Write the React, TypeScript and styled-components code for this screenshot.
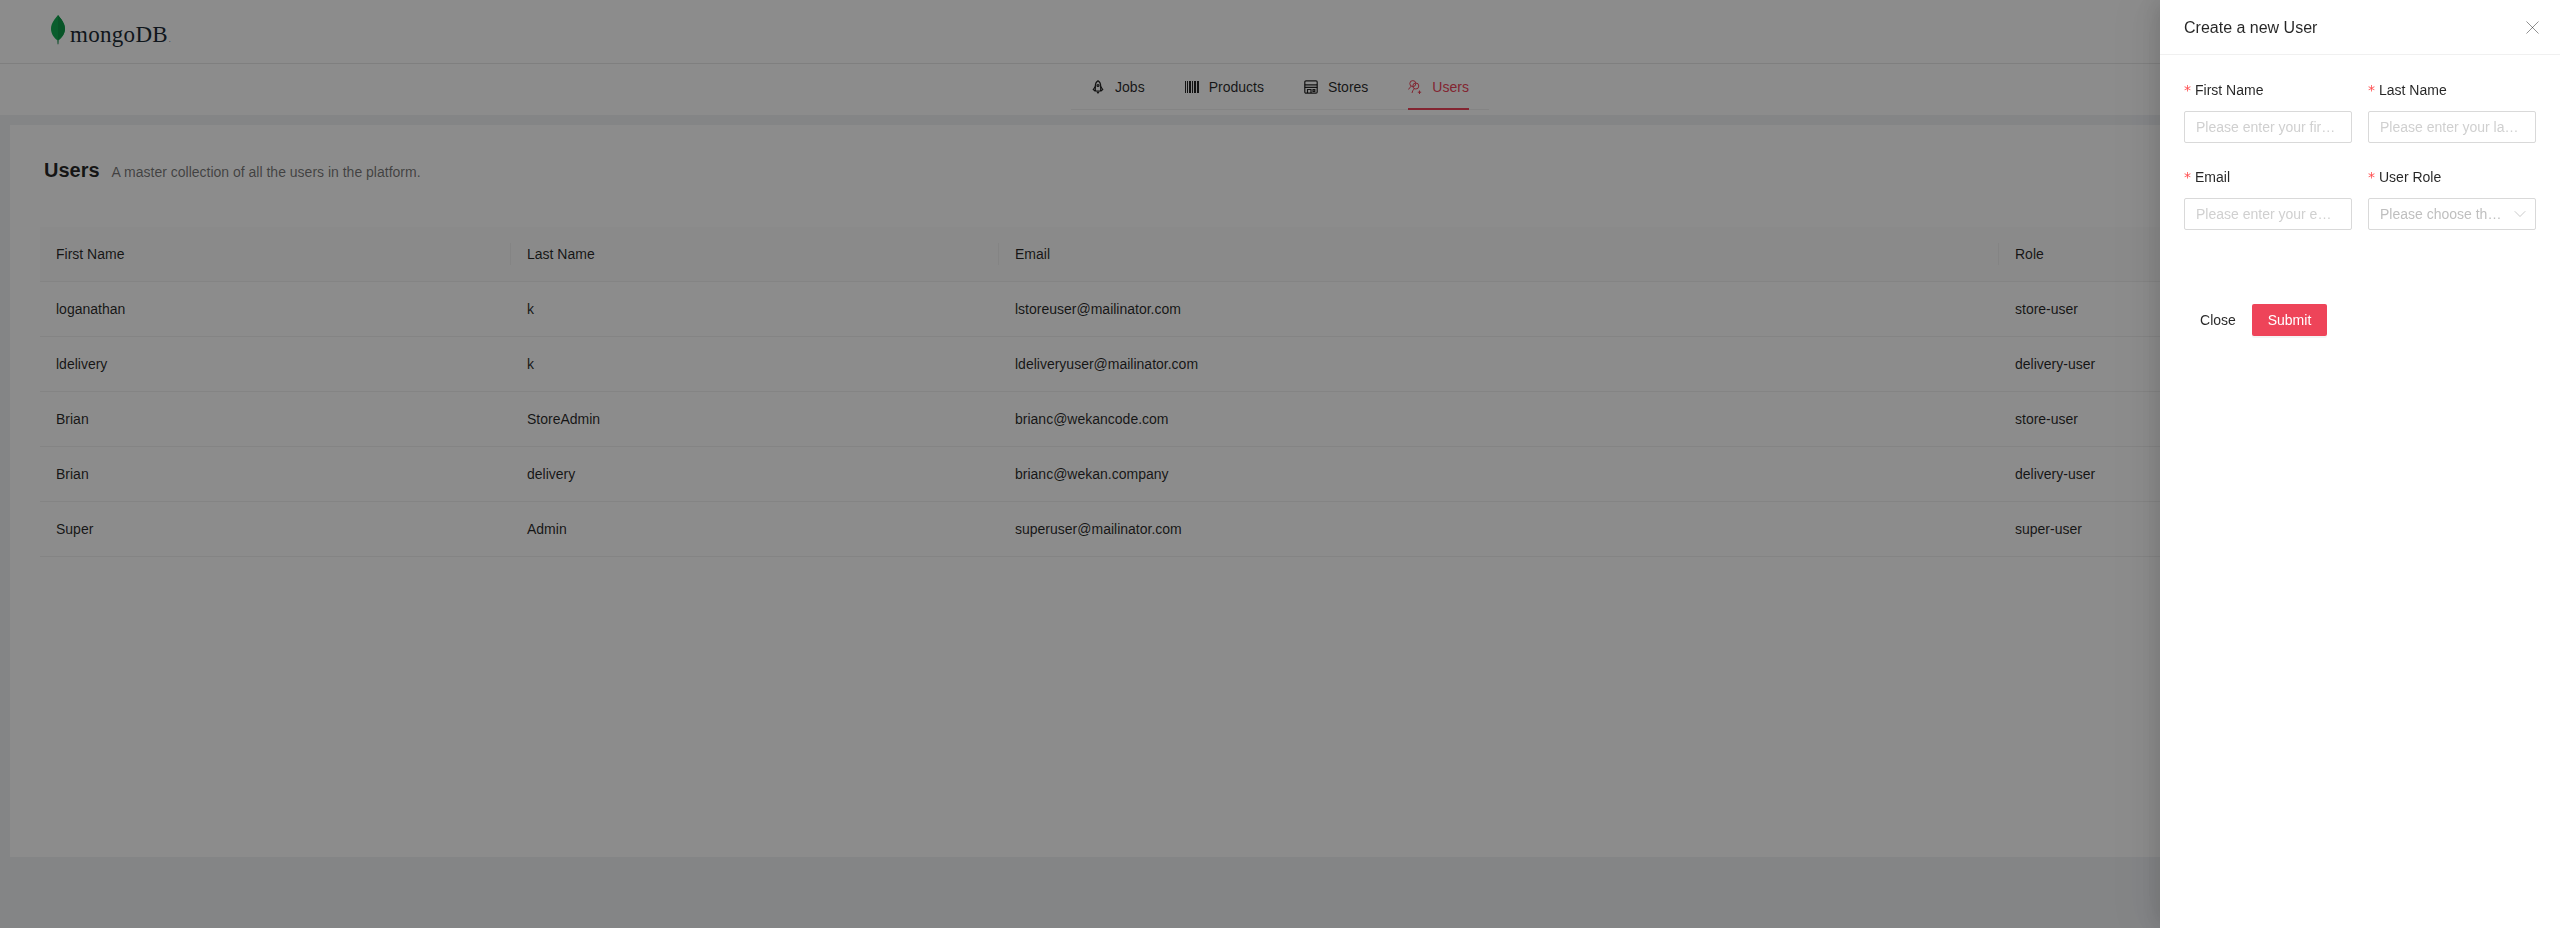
import styled, { createGlobalStyle } from "styled-components";
import { X, ChevronDown } from "lucide-react";

const GlobalStyle = createGlobalStyle`
  html, body {
    margin: 0;
    padding: 0;
    height: 100%;
    overflow: hidden;
    background: #f0f2f5;
    font-family: "Liberation Sans", Arial, sans-serif;
    font-size: 14px;
    color: rgba(0, 0, 0, 0.85);
  }
`;

const Page = styled.div`
  width: 2560px;
  height: 928px;
  display: flex;
  flex-direction: column;
  overflow: hidden;
`;

const TopBar = styled.header`
  height: 64px;
  box-sizing: border-box;
  flex: none;
  display: flex;
  align-items: center;
  padding-left: 50px;
  background: #fff;
  border-bottom: 1px solid #e8e8e8;
`;

const NavBar = styled.nav`
  height: 51px;
  flex: none;
  display: flex;
  justify-content: center;
  align-items: flex-start;
  background: #fff;
`;

const NavTabs = styled.div`
  display: flex;
  gap: 40px;
  height: 46px;
  padding: 0 20px;
  box-sizing: border-box;
  border-bottom: 1px solid #f0f0f0;
`;

const NavItem = styled.a<{ $active?: boolean }>`
  display: flex;
  align-items: center;
  gap: 10px;
  height: 46px;
  padding-top: 2px;
  box-sizing: border-box;
  color: ${(p) => (p.$active ? "#ee4459" : "rgba(0, 0, 0, 0.85)")};
  border-bottom: 2px solid ${(p) => (p.$active ? "#ee4459" : "transparent")};
`;

const Content = styled.main`
  flex: 1;
  padding: 10px 0 0 10px;
`;

const Card = styled.section`
  height: 732px;
  box-sizing: border-box;
  background: #fff;
  padding: 34px 0 0 30px;
`;

const TitleRow = styled.div`
  display: flex;
  align-items: baseline;
  gap: 12px;
  height: 68px;
  padding-left: 4px;
`;

const Title = styled.h1`
  margin: 0;
  font-size: 20px;
  font-weight: 700;
`;

const Subtitle = styled.span`
  font-size: 14px;
  color: rgba(0, 0, 0, 0.55);
`;

const Table = styled.table`
  width: 2520px;
  border-collapse: collapse;
  table-layout: fixed;
`;

const HeadCell = styled.th`
  position: relative;
  height: 54px;
  padding: 0 16px;
  box-sizing: border-box;
  text-align: left;
  font-weight: 400;
  background: #fcfcfc;
  border-bottom: 1px solid #f0f0f0;

  &:not(:first-child)::before {
    content: "";
    position: absolute;
    left: -1px;
    top: 16px;
    width: 1px;
    height: 22px;
    background: #f0f0f0;
  }
`;

const Cell = styled.td`
  height: 55px;
  padding: 0 16px;
  box-sizing: border-box;
  border-bottom: 1px solid #f0f0f0;
`;

const Mask = styled.div`
  position: fixed;
  inset: 0;
  background: rgba(0, 0, 0, 0.45);
`;

const Drawer = styled.aside`
  position: fixed;
  top: 0;
  right: 0;
  bottom: 0;
  width: 400px;
  background: #fff;
  box-shadow: -6px 0 16px rgba(0, 0, 0, 0.08), -9px 0 28px rgba(0, 0, 0, 0.05), -12px 0 48px 16px rgba(0, 0, 0, 0.03);
`;

const DrawerHeader = styled.div`
  height: 55px;
  box-sizing: border-box;
  display: flex;
  align-items: center;
  justify-content: space-between;
  padding: 1px 24px 0;
  border-bottom: 1px solid #f0f0f0;
`;

const DrawerTitle = styled.div`
  font-size: 16px;
`;

const CloseIcon = styled(X)`
  color: rgba(0, 0, 0, 0.45);
  margin-right: -8px;
`;

const Form = styled.form`
  padding: 25px 24px 24px;
`;

const FieldGrid = styled.div`
  display: grid;
  grid-template-columns: 168px 168px;
  column-gap: 16px;
  row-gap: 24px;
`;

const Field = styled.div`
  display: flex;
  flex-direction: column;
`;

const Label = styled.label`
  height: 31px;
  line-height: 21px;
  box-sizing: border-box;

  &::before {
    content: "*";
    display: inline-block;
    margin-right: 4px;
    color: #ff4d4f;
    font-family: "DejaVu Sans", sans-serif;
  }
`;

const Input = styled.input`
  width: 100%;
  height: 32px;
  box-sizing: border-box;
  padding: 0 11px;
  border: 1px solid #d9d9d9;
  border-radius: 2px;
  outline: none;
  font: inherit;
  background: #fff;
  text-overflow: ellipsis;

  &::placeholder {
    color: #d0d0d0;
  }
`;

const Select = styled.div`
  height: 32px;
  box-sizing: border-box;
  display: flex;
  align-items: center;
  gap: 8px;
  padding: 0 11px;
  border: 1px solid #d9d9d9;
  border-radius: 2px;
  color: #bfbfbf;
`;

const SelectText = styled.span`
  flex: 1;
  min-width: 0;
  white-space: nowrap;
  overflow: hidden;
  text-overflow: ellipsis;
`;

const SelectArrow = styled(ChevronDown)`
  flex: none;
  margin: 0 -6px 0 -2px;
`;

const Actions = styled.div`
  display: flex;
  margin-top: 74px;
`;

const TextButton = styled.button`
  width: 68px;
  height: 32px;
  padding: 0;
  border: 0;
  background: none;
  font: inherit;
  color: rgba(0, 0, 0, 0.85);
`;

const PrimaryButton = styled.button`
  width: 75px;
  height: 32px;
  padding: 0;
  border: 0;
  border-radius: 2px;
  background: #ee4459;
  font: inherit;
  color: #fff;
  box-shadow: 0 2px 0 rgba(0, 0, 0, 0.045);
`;

const LeafBox = styled.span`
  display: flex;
  margin-bottom: 3px;
`;

const Leaf = () => (
  <LeafBox>
    <svg width="16" height="32" viewBox="0 0 16 32">
      <path d="M8 1C5 5 1 9 1 15c0 5 3.500 9 6 11l.5 4h1l.5-4c2.500-2 6-6 6-11C15 9 11 5 8 1z" fill="#13aa52" />
      <path d="M8 1v25c2.500-2 7-6 7-11C15 9 11 5 8 1z" fill="#109a4a" />
      <path d="M7.500 26h1l-.2 5h-.6z" fill="#b8c4c2" />
    </svg>
  </LeafBox>
);

const Wordmark = styled.span`
  font-family: "Liberation Serif", serif;
  font-size: 23px;
  letter-spacing: 0.3px;
  color: #1d2b35;
  margin-left: 4px;
  line-height: 1;
  padding-top: 6px;
`;

const WordmarkDot = styled.span`
  font-size: 6px;
  margin-left: 1px;
`;

const RocketIcon = () => (
  <svg width="14" height="14" viewBox="0 0 14 14" fill="none" stroke="currentColor" strokeWidth="1.200">
    <path d="M7 .8C5.300 1.800 4.300 3.500 4.300 6v5h5.400V6C9.700 3.500 8.700 1.800 7 .8z" />
    <circle cx="7" cy="5.500" r="1" />
    <path d="M4.300 6.500L2.300 9.500l2 1.500M9.700 6.500l2 3-2 1.500M5.800 11.500L7 13l1.200-1.500" />
  </svg>
);

const BarcodeIcon = () => (
  <svg width="14" height="14" viewBox="0 0 14 14" fill="currentColor">
    <rect x="0" y="1" width="1" height="12" />
    <rect x="2" y="1" width="1" height="12" />
    <rect x="4" y="1" width="2" height="12" />
    <rect x="7" y="1" width="1" height="12" />
    <rect x="9" y="1" width="2" height="12" />
    <rect x="12" y="1" width="2" height="12" />
  </svg>
);

const StoreIcon = () => (
  <svg width="14" height="14" viewBox="0 0 14 14" fill="none" stroke="currentColor" strokeWidth="1.200">
    <rect x=".8" y=".8" width="12.400" height="12.400" rx="1.200" />
    <path d="M.8 4.800h12.400M.8 7.300h12.400M3.500 13V9.500H7V13M9 9.500h1.800v1.800H9z" />
  </svg>
);

const UsersIcon = () => (
  <svg width="14" height="14" viewBox="0 0 14 14" fill="none" stroke="currentColor" strokeWidth="1">
    <circle cx="4.800" cy="3.600" r="3" />
    <circle cx="7.800" cy="6" r="3" />
    <path d="M.6 9.500c.6-1.500 1.500-2.600 2.700-3.200M4 13c.3-1.800 1-3 2.200-4M11.500 10.500v3.500M9.800 12.200h3.400" />
  </svg>
);

const rows = [
  ["loganathan", "k", "lstoreuser@mailinator.com", "store-user"],
  ["ldelivery", "k", "ldeliveryuser@mailinator.com", "delivery-user"],
  ["Brian", "StoreAdmin", "brianc@wekancode.com", "store-user"],
  ["Brian", "delivery", "brianc@wekan.company", "delivery-user"],
  ["Super", "Admin", "superuser@mailinator.com", "super-user"],
];

const App = () => {
  return (
    <>
      <GlobalStyle />
      <Page>
        <TopBar>
          <Leaf />
          <Wordmark>
            mongoDB<WordmarkDot>.</WordmarkDot>
          </Wordmark>
        </TopBar>
        <NavBar>
          <NavTabs>
            <NavItem><RocketIcon />Jobs</NavItem>
            <NavItem><BarcodeIcon />Products</NavItem>
            <NavItem><StoreIcon />Stores</NavItem>
            <NavItem $active><UsersIcon />Users</NavItem>
          </NavTabs>
        </NavBar>
        <Content>
          <Card>
            <TitleRow>
              <Title>Users</Title>
              <Subtitle>A master collection of all the users in the platform.</Subtitle>
            </TitleRow>
            <Table>
              <colgroup>
                <col style={{ width: 471 }} />
                <col style={{ width: 488 }} />
                <col style={{ width: 1000 }} />
                <col style={{ width: 561 }} />
              </colgroup>
              <thead>
                <tr>
                  <HeadCell>First Name</HeadCell>
                  <HeadCell>Last Name</HeadCell>
                  <HeadCell>Email</HeadCell>
                  <HeadCell>Role</HeadCell>
                </tr>
              </thead>
              <tbody>
                {rows.map((r) => (
                  <tr key={r[2]}>
                    {r.map((c, i) => (
                      <Cell key={i}>{c}</Cell>
                    ))}
                  </tr>
                ))}
              </tbody>
            </Table>
          </Card>
        </Content>
      </Page>
      <Mask />
      <Drawer>
        <DrawerHeader>
          <DrawerTitle>Create a new User</DrawerTitle>
          <CloseIcon size={23} strokeWidth={1} />
        </DrawerHeader>
        <Form>
          <FieldGrid>
            <Field>
              <Label>First Name</Label>
              <Input placeholder="Please enter your first name" />
            </Field>
            <Field>
              <Label>Last Name</Label>
              <Input placeholder="Please enter your last name" />
            </Field>
            <Field>
              <Label>Email</Label>
              <Input placeholder="Please enter your email" />
            </Field>
            <Field>
              <Label>User Role</Label>
              <Select>
                <SelectText>Please choose the user role</SelectText>
                <SelectArrow size={20} strokeWidth={1} />
              </Select>
            </Field>
          </FieldGrid>
          <Actions>
            <TextButton type="button">Close</TextButton>
            <PrimaryButton type="button">Submit</PrimaryButton>
          </Actions>
        </Form>
      </Drawer>
    </>
  );
};

export default App;
